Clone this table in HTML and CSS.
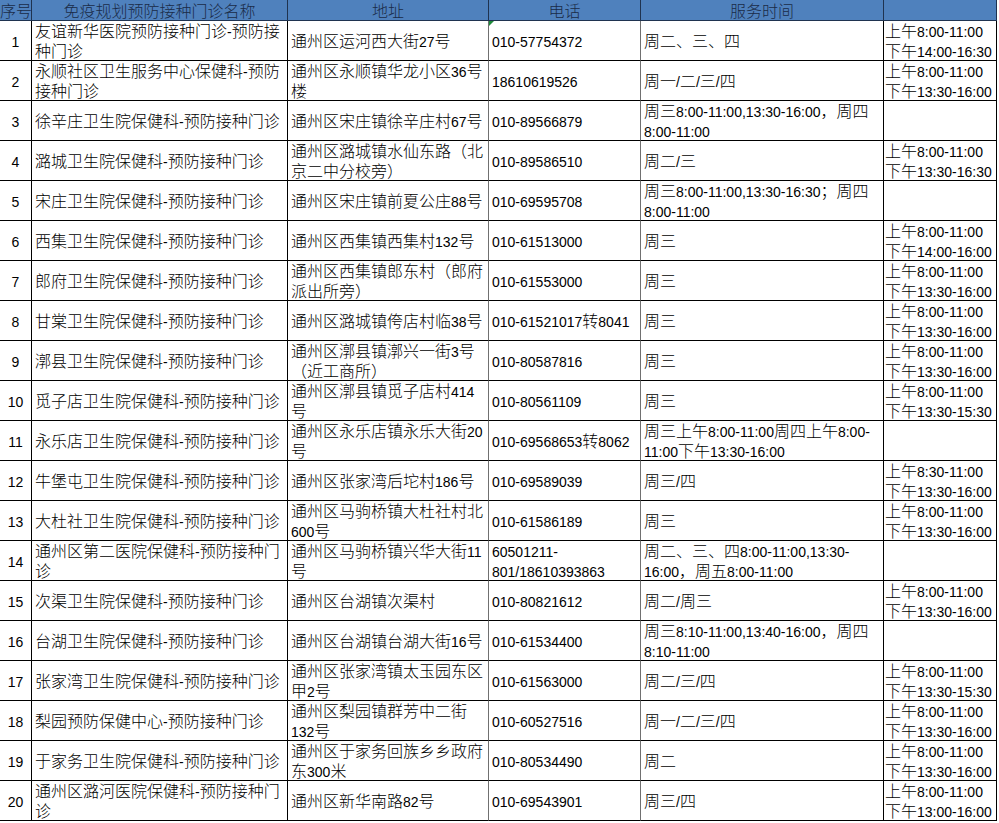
FILE: index.html
```html
<!DOCTYPE html>
<html lang="zh-CN">
<head>
<meta charset="utf-8">
<title>通州区预防接种门诊</title>
<link rel="stylesheet" href="styles.css">
</head>
<body>
<table class="sheet">
<colgroup>
<col class="w1"><col class="w2"><col class="w3"><col class="w4"><col class="w5"><col class="w6">
</colgroup>
<thead>
<tr class="hd"><th>序号</th><th>免疫规划预防接种门诊名称</th><th>地址</th><th>电话</th><th>服务时间</th><th></th></tr>
</thead>
<tbody>
<tr><td class="no"><span class="n">1</span></td><td>友谊新华医院预防接种门诊<span class="n">-</span>预防接<br>种门诊</td><td>通州区运河西大街<span class="n">27</span>号</td><td class="tel flag"><span class="n">010-57754372</span></td><td>周二、三、四</td><td class="tm">上午<span class="n">8:00-11:00</span><br>下午<span class="n">14:00-16:30</span></td></tr>
<tr><td class="no"><span class="n">2</span></td><td>永顺社区卫生服务中心保健科<span class="n">-</span>预防<br>接种门诊</td><td>通州区永顺镇华龙小区<span class="n">36</span>号<br>楼</td><td class="tel"><span class="n">18610619526</span></td><td>周一<span class="n">/</span>二<span class="n">/</span>三<span class="n">/</span>四</td><td class="tm">上午<span class="n">8:00-11:00</span><br>下午<span class="n">13:30-16:00</span></td></tr>
<tr><td class="no"><span class="n">3</span></td><td>徐辛庄卫生院保健科<span class="n">-</span>预防接种门诊</td><td>通州区宋庄镇徐辛庄村<span class="n">67</span>号</td><td class="tel"><span class="n">010-89566879</span></td><td>周三<span class="n">8:00-11:00,13:30-16:00</span>，周四<br><span class="n">8:00-11:00</span></td><td class="tm"></td></tr>
<tr><td class="no"><span class="n">4</span></td><td>潞城卫生院保健科<span class="n">-</span>预防接种门诊</td><td>通州区潞城镇水仙东路（北<br>京二中分校旁）</td><td class="tel"><span class="n">010-89586510</span></td><td>周二<span class="n">/</span>三</td><td class="tm">上午<span class="n">8:00-11:00</span><br>下午<span class="n">13:30-16:30</span></td></tr>
<tr><td class="no"><span class="n">5</span></td><td>宋庄卫生院保健科<span class="n">-</span>预防接种门诊</td><td>通州区宋庄镇前夏公庄<span class="n">88</span>号</td><td class="tel"><span class="n">010-69595708</span></td><td>周三<span class="n">8:00-11:00,13:30-16:30</span>；周四<br><span class="n">8:00-11:00</span></td><td class="tm"></td></tr>
<tr><td class="no"><span class="n">6</span></td><td>西集卫生院保健科<span class="n">-</span>预防接种门诊</td><td>通州区西集镇西集村<span class="n">132</span>号</td><td class="tel"><span class="n">010-61513000</span></td><td>周三</td><td class="tm">上午<span class="n">8:00-11:00</span><br>下午<span class="n">14:00-16:00</span></td></tr>
<tr><td class="no"><span class="n">7</span></td><td>郎府卫生院保健科<span class="n">-</span>预防接种门诊</td><td>通州区西集镇郎东村（郎府<br>派出所旁）</td><td class="tel"><span class="n">010-61553000</span></td><td>周三</td><td class="tm">上午<span class="n">8:00-11:00</span><br>下午<span class="n">13:30-16:00</span></td></tr>
<tr><td class="no"><span class="n">8</span></td><td>甘棠卫生院保健科<span class="n">-</span>预防接种门诊</td><td>通州区潞城镇侉店村临<span class="n">38</span>号</td><td class="tel"><span class="n">010-61521017</span>转<span class="n">8041</span></td><td>周三</td><td class="tm">上午<span class="n">8:00-11:00</span><br>下午<span class="n">13:30-16:00</span></td></tr>
<tr><td class="no"><span class="n">9</span></td><td>漷县卫生院保健科<span class="n">-</span>预防接种门诊</td><td>通州区漷县镇漷兴一街<span class="n">3</span>号<br>（近工商所）</td><td class="tel"><span class="n">010-80587816</span></td><td>周三</td><td class="tm">上午<span class="n">8:00-11:00</span><br>下午<span class="n">13:30-16:00</span></td></tr>
<tr><td class="no"><span class="n">10</span></td><td>觅子店卫生院保健科<span class="n">-</span>预防接种门诊</td><td>通州区漷县镇觅子店村<span class="n">414</span><br>号</td><td class="tel"><span class="n">010-80561109</span></td><td>周三</td><td class="tm">上午<span class="n">8:00-11:00</span><br>下午<span class="n">13:30-15:30</span></td></tr>
<tr><td class="no"><span class="n">11</span></td><td>永乐店卫生院保健科<span class="n">-</span>预防接种门诊</td><td>通州区永乐店镇永乐大街<span class="n">20</span><br>号</td><td class="tel"><span class="n">010-69568653</span>转<span class="n">8062</span></td><td>周三上午<span class="n">8:00-11:00</span>周四上午<span class="n">8:00-</span><br><span class="n">11:00</span>下午<span class="n">13:30-16:00</span></td><td class="tm"></td></tr>
<tr><td class="no"><span class="n">12</span></td><td>牛堡屯卫生院保健科<span class="n">-</span>预防接种门诊</td><td>通州区张家湾后坨村<span class="n">186</span>号</td><td class="tel"><span class="n">010-69589039</span></td><td>周三<span class="n">/</span>四</td><td class="tm">上午<span class="n">8:30-11:00</span><br>下午<span class="n">13:30-16:00</span></td></tr>
<tr><td class="no"><span class="n">13</span></td><td>大杜社卫生院保健科<span class="n">-</span>预防接种门诊</td><td>通州区马驹桥镇大杜社村北<br><span class="n">600</span>号</td><td class="tel"><span class="n">010-61586189</span></td><td>周三</td><td class="tm">上午<span class="n">8:00-11:00</span><br>下午<span class="n">13:30-16:00</span></td></tr>
<tr><td class="no"><span class="n">14</span></td><td>通州区第二医院保健科<span class="n">-</span>预防接种门<br>诊</td><td>通州区马驹桥镇兴华大街<span class="n">11</span><br>号</td><td class="tel"><span class="n">60501211-</span><br><span class="n">801/18610393863</span></td><td>周二、三、四<span class="n">8:00-11:00,13:30-</span><br><span class="n">16:00</span>，周五<span class="n">8:00-11:00</span></td><td class="tm"></td></tr>
<tr><td class="no"><span class="n">15</span></td><td>次渠卫生院保健科<span class="n">-</span>预防接种门诊</td><td>通州区台湖镇次渠村</td><td class="tel"><span class="n">010-80821612</span></td><td>周二<span class="n">/</span>周三</td><td class="tm">上午<span class="n">8:00-11:00</span><br>下午<span class="n">13:30-16:00</span></td></tr>
<tr><td class="no"><span class="n">16</span></td><td>台湖卫生院保健科<span class="n">-</span>预防接种门诊</td><td>通州区台湖镇台湖大街<span class="n">16</span>号</td><td class="tel"><span class="n">010-61534400</span></td><td>周三<span class="n">8:10-11:00,13:40-16:00</span>，周四<br><span class="n">8:10-11:00</span></td><td class="tm"></td></tr>
<tr><td class="no"><span class="n">17</span></td><td>张家湾卫生院保健科<span class="n">-</span>预防接种门诊</td><td>通州区张家湾镇太玉园东区<br>甲<span class="n">2</span>号</td><td class="tel"><span class="n">010-61563000</span></td><td>周二<span class="n">/</span>三<span class="n">/</span>四</td><td class="tm">上午<span class="n">8:00-11:00</span><br>下午<span class="n">13:30-15:30</span></td></tr>
<tr><td class="no"><span class="n">18</span></td><td>梨园预防保健中心<span class="n">-</span>预防接种门诊</td><td>通州区梨园镇群芳中二街<br><span class="n">132</span>号</td><td class="tel"><span class="n">010-60527516</span></td><td>周一<span class="n">/</span>二<span class="n">/</span>三<span class="n">/</span>四</td><td class="tm">上午<span class="n">8:00-11:00</span><br>下午<span class="n">13:30-16:00</span></td></tr>
<tr><td class="no"><span class="n">19</span></td><td>于家务卫生院保健科<span class="n">-</span>预防接种门诊</td><td>通州区于家务回族乡乡政府<br>东<span class="n">300</span>米</td><td class="tel"><span class="n">010-80534490</span></td><td>周二</td><td class="tm">上午<span class="n">8:00-11:00</span><br>下午<span class="n">13:30-16:00</span></td></tr>
<tr><td class="no"><span class="n">20</span></td><td>通州区潞河医院保健科<span class="n">-</span>预防接种门<br>诊</td><td>通州区新华南路<span class="n">82</span>号</td><td class="tel"><span class="n">010-69543901</span></td><td>周三<span class="n">/</span>四</td><td class="tm">上午<span class="n">8:00-11:00</span><br>下午<span class="n">13:00-16:00</span></td></tr>
</tbody>
</table>
</body>
</html>
```
FILE: styles.css
```css
html, body {
  margin: 0;
  padding: 0;
  background: #ffffff;
}

.sheet {
  table-layout: fixed;
  width: 997px;
  border-collapse: separate;
  border-spacing: 0;
  font-family: "Noto Sans CJK SC", "Noto Sans CJK JP", sans-serif;
  font-size: 16px;
  font-weight: 300;
  line-height: 19.5px;
  color: #000;
}

.w1 { width: 32px; }
.w2 { width: 256px; }
.w3 { width: 201px; }
.w4 { width: 152px; }
.w5 { width: 243px; }
.w6 { width: 113px; }

.sheet th,
.sheet td {
  box-sizing: border-box;
  border-right: 1px solid #000;
  border-bottom: 1px solid #000;
  padding: 0 0 0 3px;
  white-space: nowrap;
  overflow: hidden;
  vertical-align: middle;
  text-align: left;
}

.hd {
  height: 20px;
}

.sheet th {
  background: #4f81bd;
  color: #1a2b48;
  font-weight: 300;
  line-height: 20px;
  text-align: center;
  padding: 0;
  border-right-color: #1f3350;
  border-bottom-color: #1f3350;
}

.sheet tbody tr {
  height: 39px;
}

.sheet td.no {
  text-align: center;
  padding: 0;
}

.sheet td.tm {
  padding-left: 1px;
}

.n {
  font-family: "Liberation Sans", Arial, sans-serif;
  font-size: 14px;
  font-weight: 400;
  line-height: 14px;
}

.flag {
  position: relative;
}

.flag::before {
  content: "";
  position: absolute;
  left: 0;
  top: 0;
  border-top: 5px solid #1e8a3a;
  border-right: 5px solid transparent;
}

.sheet td:nth-child(3) {
  border-right: 1px solid #707070;
}

.sheet td:nth-child(4) {
  border-right: 1px solid #707070;
}
```
